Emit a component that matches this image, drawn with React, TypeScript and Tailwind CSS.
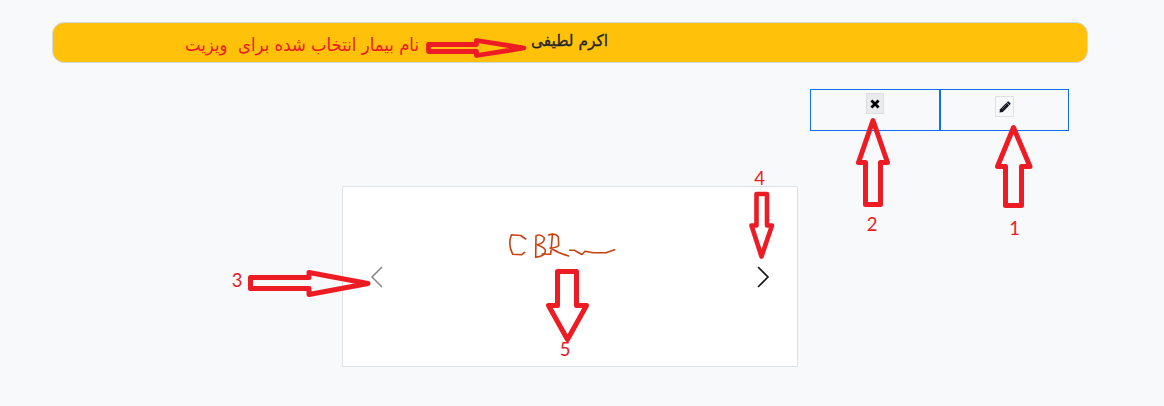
import React from "react";

const ARROWS = [
  { w: 4.8, d: "M428.5 44.5H476.5V40.5L524 48L476.5 55.5V51.5H428.5Z" },
  { w: 5, d: "M1013.5 127.5L997.5 166.5H1005.5V205.5H1021.5V166.5H1030Z" },
  { w: 5, d: "M873 120.5L858.5 162.5H865.5V204.5H880.5V162.5H887.5Z" },
  { w: 5, d: "M250.5 277.5H309V272.5L368 283.5L309 294.5V288.5H250.5Z" },
  { w: 4.6, d: "M756.5 194H767V225.5H772L761.5 256.5L751.5 225.5H756.5Z" },
  { w: 5, d: "M557.5 271.5H576.5V305.5H586.5L567.5 339.5L548.5 305.5H557.5Z" },
];

const NUMBERS = [
  { n: "1", x: 1014.5, y: 235 },
  { n: "2", x: 872, y: 231 },
  { n: "3", x: 237, y: 287 },
  { n: "4", x: 759.5, y: 185 },
  { n: "5", x: 565, y: 356 },
];

function Annotations() {
  return (
    <svg
      className="pointer-events-none absolute inset-0 h-[406px] w-[1164px]"
      viewBox="0 0 1164 406"
      fill="none"
    >
      {ARROWS.map((a) => (
        <path key={a.d} d={a.d} stroke="#ed1c24" strokeWidth={a.w} strokeLinejoin="round" />
      ))}
      {NUMBERS.map((m) => (
        <text
          key={m.n}
          x={m.x}
          y={m.y}
          textAnchor="middle"
          fill="#ed1c24"
          className="font-[Lato,sans-serif] text-[18.5px]"
        >
          {m.n}
        </text>
      ))}
      <text
        x="419"
        y="50.5"
        direction="rtl"
        textLength="234"
        lengthAdjust="spacingAndGlyphs"
        fill="#ed1c24"
        className="whitespace-pre font-['DejaVu_Sans',sans-serif] text-[18px]"
      >
        {"نام بیمار انتخاب شده برای  ویزیت"}
      </text>
    </svg>
  );
}

export default function App() {
  return (
    <div className="relative h-[406px] w-full overflow-hidden bg-[#f8f9fb] pt-[22px] font-['DejaVu_Sans',sans-serif]">
      <header
        dir="rtl"
        className="ml-[52px] flex h-[41px] w-[1036px] justify-center rounded-xl border border-[#d3d9e2] bg-[#ffc10a] text-[#212529]"
      >
        <svg className="h-[39px] w-[120px]" viewBox="0 0 120 39">
          <text
            x="98"
            y="23"
            direction="rtl"
            textLength="77"
            lengthAdjust="spacingAndGlyphs"
            fill="#212529"
            stroke="#212529"
            strokeWidth="0.3"
            className="text-[16px]"
          >
            اکرم لطیفی
          </text>
        </svg>
      </header>

      <div className="mt-[26px] ml-[810px] flex h-[42px] w-[259px]">
        <div className="flex w-[130px] items-start justify-center border border-[#0d6efd] pt-[3px]">
          <button className="flex h-[21px] w-[18px] items-center justify-center border border-[#dee0e4] bg-[#e9eaee]">
            <svg className="h-[10px] w-[10px]" viewBox="0 0 10 10">
              <path d="M1.4 1.6L8.6 8.4M8.6 1.6L1.4 8.4" stroke="#000" strokeWidth="2.8" />
            </svg>
          </button>
        </div>
        <div className="flex w-[129px] items-start justify-center border border-[#0d6efd] pt-[6px]">
          <button className="flex h-[21px] w-[19px] items-center justify-center border border-[#dee2e6]">
            <svg className="h-[12px] w-[12px]" viewBox="0 0 12 12">
              <path d="M.5 11.5L1 8.2L7.4 1.8L10.2 4.6L3.8 11Z" fill="#16191f" />
              <path d="M7.7 1.5L8.7.6Q9.3.1 10 .7L11.3 2Q11.9 2.7 11.4 3.3L10.5 4.3Z" fill="#16233b" />
              <path d="M3 8L7.4 3.6" stroke="#7d8794" strokeWidth=".7" />
            </svg>
          </button>
        </div>
      </div>

      <main className="mt-[55px] ml-[342px] flex h-[181px] w-[456px] justify-between border border-[#dee2e6] bg-white px-[27px]">
        <svg className="mt-[79px] h-[22px] w-[14px]" viewBox="0 0 14 22" fill="none">
          <path d="M12 1L2 11L12 21" stroke="#858585" strokeWidth="1.5" />
        </svg>
        <svg
          className="mt-[43px] h-[32px] w-[126px]"
          viewBox="0 0 126 32"
          fill="none"
          stroke="#cc4010"
          strokeWidth="1.6"
          strokeLinecap="round"
          strokeLinejoin="round"
        >
          <path d="M18.7 9L13.7 5.5L4.5 4.7Q0.5 14 5.7 24.3L14.7 24.7L17.7 22.3" />
          <path d="M29 6L28.7 27.3M29 6Q33 3.5 37 7.5Q38.3 13 30.3 14.7Q39 18 38.3 21Q38.5 26 28.7 27.3" />
          <path d="M45.5 4L43.7 24.3L35 24M41.7 5Q48 2.5 51.3 6.7L51.7 15.5Q49 18 43 18Q51 23 61.7 26" />
          <path d="M62.7 20.3H67.3L75 24.5L78 21.3L86.3 22.7H99L107.7 19.7" />
        </svg>
        <svg className="mt-[79px] h-[22px] w-[14px]" viewBox="0 0 14 22" fill="none">
          <path d="M2 1L12 11L2 21" stroke="#151515" strokeWidth="1.6" />
        </svg>
      </main>
      <Annotations />
    </div>
  );
}
